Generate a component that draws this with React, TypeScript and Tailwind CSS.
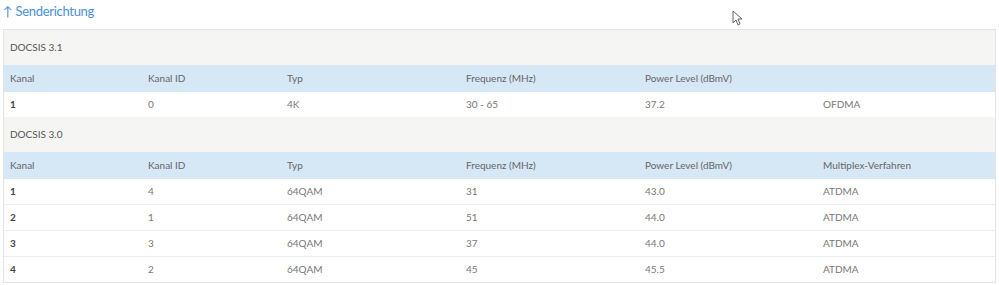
import React from 'react';

const cols = ['Kanal', 'Kanal ID', 'Typ', 'Frequenz (MHz)', 'Power Level (dBmV)'];
const widths = ['w-[138px]', 'w-[139px]', 'w-[179px]', 'w-[179px]', 'w-[178px]', ''];

const docsis31 = [['1', '0', '4K', '30 - 65', '37.2', 'OFDMA']];
const docsis30 = [
  ['1', '4', '64QAM', '31', '43.0', 'ATDMA'],
  ['2', '1', '64QAM', '51', '44.0', 'ATDMA'],
  ['3', '3', '64QAM', '37', '44.0', 'ATDMA'],
  ['4', '2', '64QAM', '45', '45.5', 'ATDMA'],
];

const Section: React.FC<{ title: string; last: string; rows: string[][] }> = ({ title, last, rows }) => (
  <>
    <div className="h-[35px] bg-[#f5f5f3] flex items-center px-[6px] text-[#555]">{title}</div>
    <div className="h-[27px] bg-[#d6e7f6] flex items-center text-[#666]">
      {[...cols, last].map((c, i) => (
        <div key={i} className={`px-[6px] ${widths[i]} ${i === 5 ? 'flex-1' : 'shrink-0'}`}>{c}</div>
      ))}
    </div>
    {rows.map((r, ri) => (
      <div
        key={ri}
        className={`flex items-center bg-white ${ri < rows.length - 1 ? 'h-[26px] border-b border-[#ececec]' : 'h-[25px]'}`}
      >
        {r.map((v, i) => (
          <div
            key={i}
            className={`px-[6px] ${widths[i]} ${i === 5 ? 'flex-1' : 'shrink-0'} ${i === 0 ? 'font-bold text-[#444]' : 'text-[#777]'}`}
          >
            {v}
          </div>
        ))}
      </div>
    ))}
  </>
);

export default function App() {
  return (
    <div className="relative w-[999px] h-[285px] bg-white font-['Lato','Open_Sans',sans-serif] text-[10px]">
      <div className="pl-[3px] pt-[2px] h-[29px] text-[13px] tracking-[-0.3px] text-[#4a90d9]">↑ Senderichtung</div>
      <div className="mx-[3px] w-[993px] border border-[#e3e3e3]">
        <Section title="DOCSIS 3.1" last="" rows={docsis31} />
        <Section title="DOCSIS 3.0" last="Multiplex-Verfahren" rows={docsis30} />
      </div>
      <svg className="absolute left-[732px] top-[10px]" width="11" height="16" viewBox="0 0 11 16">
        <path d="M1 1 L1 13 L4 10 L6 15 L8 14 L6 9 L10 9 Z" fill="#fff" stroke="#666" strokeWidth="1" strokeLinejoin="round" />
      </svg>
    </div>
  );
}
